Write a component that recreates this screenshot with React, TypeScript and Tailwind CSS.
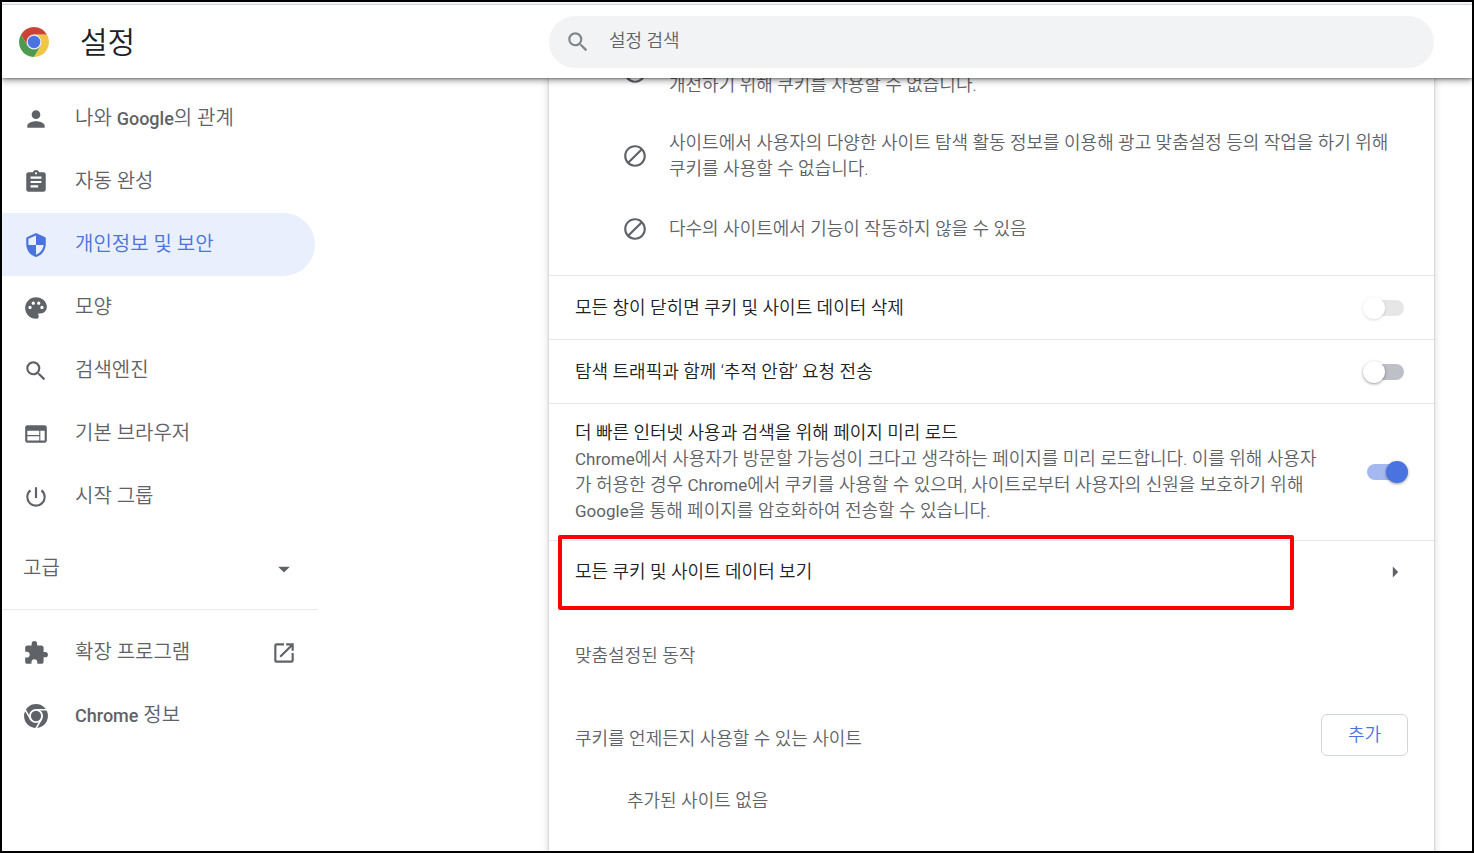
import { useState, type ReactNode } from 'react';
import type { IconType } from 'react-icons';
import {
  MdArrowDropDown,
  MdArrowRight,
  MdAssignment,
  MdBlock,
  MdExtension,
  MdOpenInNew,
  MdPalette,
  MdPerson,
  MdPowerSettingsNew,
  MdSearch,
  MdSecurity,
  MdWeb,
} from 'react-icons/md';

const MENU: { id: string; icon: IconType; label: ReactNode }[] = [
  {
    id: 'people',
    icon: MdPerson,
    label: (
      <>
        나와 <span className="text-[18px] leading-none font-medium">Google</span>의 관계
      </>
    ),
  },
  { id: 'autofill', icon: MdAssignment, label: '자동 완성' },
  { id: 'privacy', icon: MdSecurity, label: '개인정보 및 보안' },
  { id: 'appearance', icon: MdPalette, label: '모양' },
  { id: 'search', icon: MdSearch, label: '검색엔진' },
  { id: 'browser', icon: MdWeb, label: '기본 브라우저' },
  { id: 'startup', icon: MdPowerSettingsNew, label: '시작 그룹' },
];

const BLOCKED = [
  '사이트에서 사용자의 다양한 사이트 탐색 활동 정보를 이용해 광고 맞춤설정 등의 작업을 하기 위해 쿠키를 사용할 수 없습니다.',
  '다수의 사이트에서 기능이 작동하지 않을 수 있음',
];

export default function App() {
  const [active, setActive] = useState('privacy');

  return (
    <div className="flex h-screen flex-col overflow-hidden border-2 border-black bg-white font-['Roboto','Noto_Sans_CJK_KR',sans-serif] text-lg leading-[26px] font-[350] text-[#5f6368]">
      <Header />
      <div className="flex min-h-0 flex-1 overflow-hidden pr-[38px]">
        <div className="w-[547px] shrink-0">
          <Sidebar active={active} onSelect={setActive} />
        </div>
        <main className="min-w-0 flex-1">
          <CookieSettings />
        </main>
      </div>
    </div>
  );
}

function Header() {
  return (
    <header className="relative z-10 mt-0.5 flex h-[74px] shrink-0 items-center border-t border-gray-300 bg-white pr-[38px] shadow-[0_1px_2px_rgba(0,0,0,0.3),0_3px_6px_rgba(0,0,0,0.35)]">
      <div className="flex w-[547px] shrink-0 items-center gap-[31px] pl-[17px]">
        <ChromeLogo />
        <h1 className="pt-0.5 text-[30px] leading-9 text-[#202124]">설정</h1>
      </div>
      <div className="flex h-[52px] flex-1 items-center gap-[18px] rounded-full bg-[#f1f3f4] pl-4">
        <MdSearch size={26} className="text-[#80868b]" />
        <input
          type="text"
          aria-label="설정 검색"
          placeholder="설정 검색"
          className="min-w-0 flex-1 bg-transparent pr-6 pb-0.5 outline-none placeholder:text-[#5f6368]"
        />
      </div>
    </header>
  );
}

function Sidebar({ active, onSelect }: { active: string; onSelect: (id: string) => void }) {
  return (
    <nav className="w-[316px] pt-[9px] text-[20px]">
      {MENU.map((item) => (
        <MenuLink
          key={item.id}
          id={item.id}
          icon={item.icon}
          active={item.id === active}
          onClick={() => onSelect(item.id)}
        >
          {item.label}
        </MenuLink>
      ))}
      <button type="button" className="flex h-[81px] w-full items-center justify-between pr-5 pl-[21px]">
        <span className="pb-0.5">고급</span>
        <MdArrowDropDown size={28} />
      </button>
      <div className="border-t border-gray-200 pt-[11px]">
        <MenuLink id="extensions" icon={MdExtension} external>
          확장 프로그램
        </MenuLink>
        <MenuLink id="about" icon={ChromeMono}>
          <span className="text-[18px] leading-none font-medium">Chrome</span> 정보
        </MenuLink>
      </div>
    </nav>
  );
}

function MenuLink({
  id,
  icon: Icon,
  active,
  external,
  onClick,
  children,
}: {
  id: string;
  icon: IconType;
  active?: boolean;
  external?: boolean;
  onClick?: () => void;
  children: ReactNode;
}) {
  return (
    <a
      href={`#${id}`}
      onClick={onClick}
      className={`mr-[3px] flex h-[63px] items-center rounded-r-full pr-[18px] pl-[21px] ${
        active ? 'bg-[#e9effc] text-[#4a73e0]' : ''
      }`}
    >
      <Icon size={26} className="shrink-0" />
      <span className="flex-1 pb-0.5 pl-[26px]">{children}</span>
      {external && <MdOpenInNew size={26} />}
    </a>
  );
}

function CookieSettings() {
  return (
    <section className="-mt-12 h-[900px] bg-white shadow-[0_1px_2px_rgba(60,64,67,0.3),0_2px_6px_2px_rgba(60,64,67,0.15)]">
      <ul className="pb-[15px]">
        <BlockedItem>
          <span className="pt-[26px]">개선하기 위해 쿠키를 사용할 수 없습니다.</span>
        </BlockedItem>
        {BLOCKED.map((text) => (
          <BlockedItem key={text}>{text}</BlockedItem>
        ))}
      </ul>

      <ToggleRow id="clear-on-exit" title="모든 창이 닫히면 쿠키 및 사이트 데이터 삭제" disabled />
      <ToggleRow id="do-not-track" title="탐색 트래픽과 함께 ‘추적 안함’ 요청 전송" />
      <ToggleRow id="preload" title="더 빠른 인터넷 사용과 검색을 위해 페이지 미리 로드" defaultChecked>
        <Latin>Chrome</Latin>에서 사용자가 방문할 가능성이 크다고 생각하는 페이지를 미리 로드합니다. 이를 위해 사용자가
        허용한 경우 <Latin>Chrome</Latin>에서 쿠키를 사용할 수 있으며, 사이트로부터 사용자의 신원을 보호하기 위해{' '}
        <Latin>Google</Latin>을 통해 페이지를 암호화하여 전송할 수 있습니다.
      </ToggleRow>

      <div className="relative border-t border-gray-200">
        <a href="#site-data" className="flex h-[62px] items-center justify-between pr-[26px] pl-[26px] text-[#202124]">
          모든 쿠키 및 사이트 데이터 보기
          <MdArrowRight size={26} className="text-[#5f6368]" />
        </a>
        <div className="pointer-events-none absolute -top-[6px] right-[140px] left-[9px] h-[75px] rounded-xs border-4 border-[#fe0000]" />
      </div>

      <h2 className="px-[26px] pt-10">맞춤설정된 동작</h2>
      <div className="flex items-center justify-between px-[26px] pt-[45px]">
        <h3 className="pt-2">쿠키를 언제든지 사용할 수 있는 사이트</h3>
        <button type="button" className="h-[42px] w-[87px] rounded-md border border-gray-300 text-[#4a73e0]">
          추가
        </button>
      </div>
      <p className="pt-8 pl-[78px]">추가된 사이트 없음</p>
    </section>
  );
}

function BlockedItem({ children }: { children: ReactNode }) {
  return (
    <li className="flex items-center gap-[21px] py-4 pr-7 pl-[73px]">
      <MdBlock size={26} className="shrink-0" />
      <p className="flex min-h-[30px] items-center">{children}</p>
    </li>
  );
}

function Latin({ children }: { children: ReactNode }) {
  return <span className="text-[17px] leading-none font-normal">{children}</span>;
}

function ToggleRow({
  id,
  title,
  disabled,
  defaultChecked,
  children,
}: {
  id: string;
  title: string;
  disabled?: boolean;
  defaultChecked?: boolean;
  children?: ReactNode;
}) {
  return (
    <div className="flex min-h-16 items-center justify-between border-t border-gray-200 py-4 pr-[30px] pl-[26px]">
      <div className="max-w-[754px]">
        <label htmlFor={id} className="block text-[#202124]">
          {title}
        </label>
        {children && <p>{children}</p>}
      </div>
      <input
        id={id}
        type="checkbox"
        disabled={disabled}
        defaultChecked={defaultChecked}
        className="relative h-4 w-[37px] shrink-0 appearance-none rounded-full bg-[#bdc1c6] before:absolute before:-top-[3px] before:-left-1 before:size-[22px] before:rounded-full before:bg-white before:shadow-[0_1px_3px_rgba(0,0,0,0.4)] checked:bg-[#a5b9f0] checked:before:left-[19px] checked:before:bg-[#4a73e0] disabled:bg-[#e5e6e8] disabled:before:shadow-[0_1px_3px_rgba(0,0,0,0.15)]"
      />
    </div>
  );
}

function ChromeLogo() {
  return (
    <svg width="30" height="30" viewBox="0 0 48 48" aria-hidden="true">
      <path d="M24 12H44.78A24 24 0 0 1 24 48L34.39 30Z" fill="#f1c644" />
      <path d="M3.22 12A24 24 0 0 0 24 48L34.39 30 24 24 13.61 30Z" fill="#4c9a50" />
      <path d="M24 12H44.78A24 24 0 0 0 3.22 12L13.61 30Z" fill="#c94434" />
      <circle cx="24" cy="24" r="12" fill="#e8eefb" />
      <circle cx="24" cy="24" r="10" fill="#4a73e0" />
    </svg>
  );
}

function ChromeMono({ size = 26, className }: { size?: number | string; className?: string }) {
  return (
    <svg width={size} height={size} viewBox="0 0 48 48" fill="currentColor" className={className} aria-hidden="true">
      <circle cx="24" cy="24" r="22" />
      <circle cx="24" cy="24" r="13" fill="#fff" />
      <path d="M24 12.5H46M14.04 29.75 3.04 10.7M33.96 29.75 22.96 48.8" fill="none" stroke="#fff" strokeWidth="3" />
      <circle cx="24" cy="24" r="9.5" />
    </svg>
  );
}
